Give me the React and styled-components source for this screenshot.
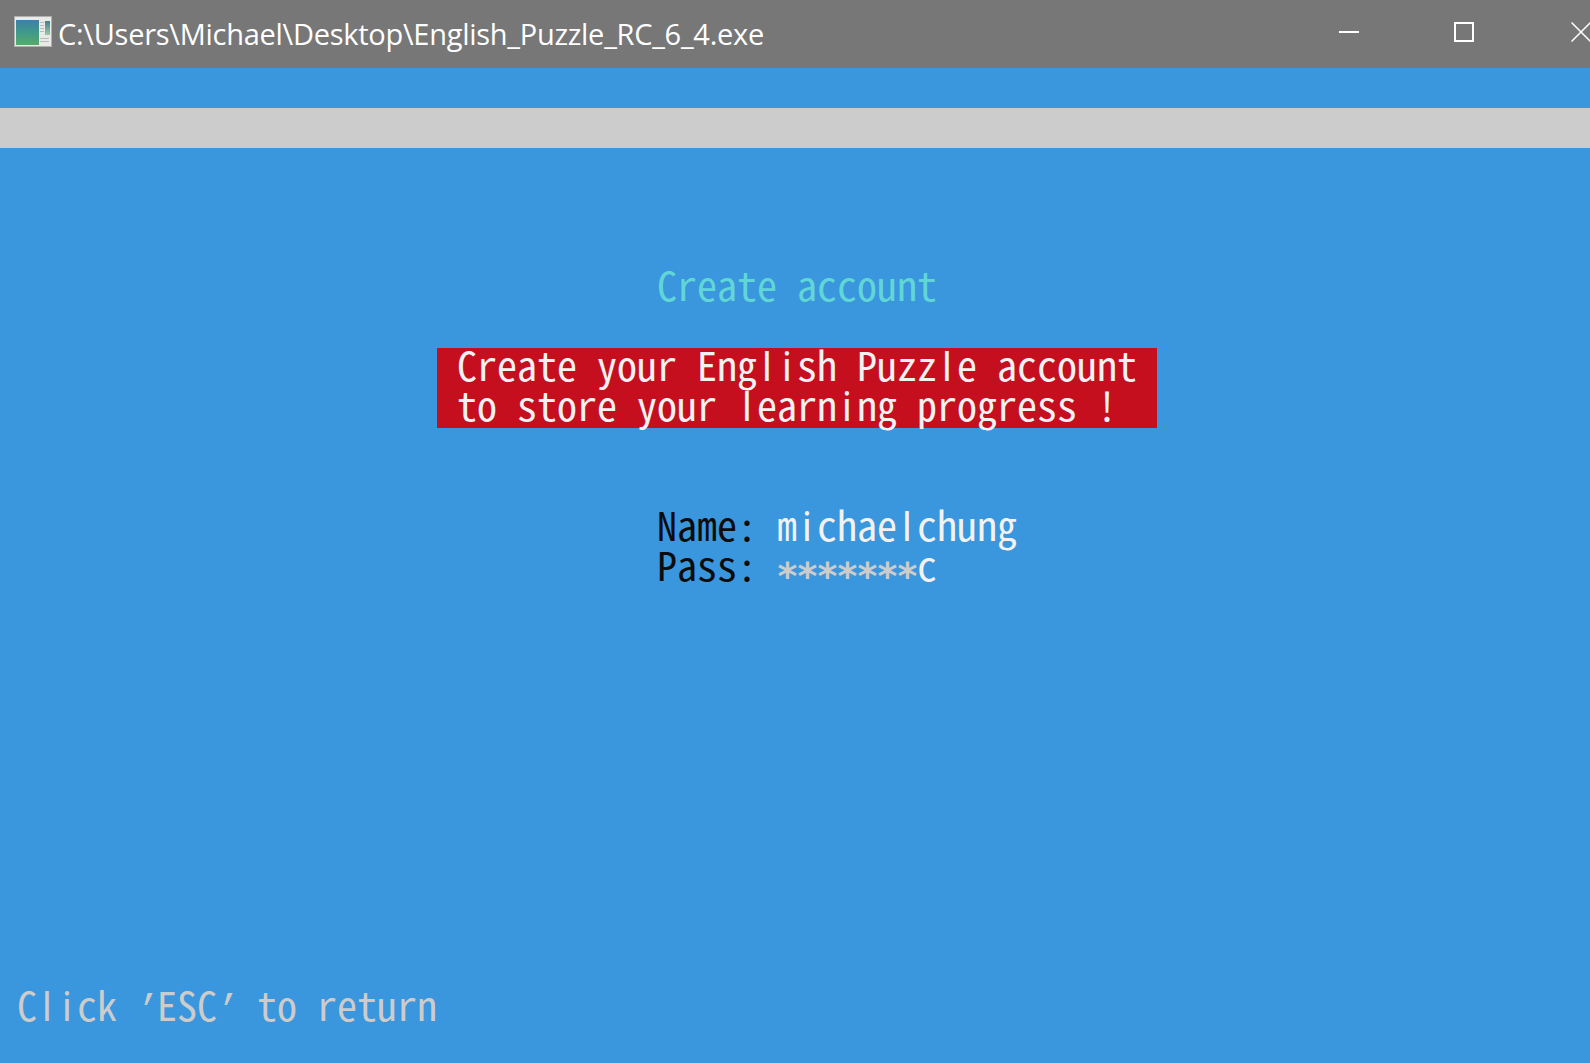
import styled, { createGlobalStyle } from "styled-components";

const COLORS = {
  blue: "#3a96dd",
  cyan: "#61d6d6",
  red: "#c50f1f",
  white: "#f2f2f2",
  gray: "#cccccc",
  black: "#0c0c0c",
};

const GlobalStyle = createGlobalStyle`
  html, body {
    margin: 0;
    padding: 0;
    height: 100%;
    overflow: hidden;
  }
  #root {
    height: 100%;
  }
`;

const AppIcon = () => (
  <svg width="38" height="31" viewBox="0 0 38 31">
    <defs>
      <linearGradient id="pane" x1="0" y1="0" x2="0" y2="1">
        <stop offset="0" stopColor="#3f7fa8" />
        <stop offset="0.5" stopColor="#3f9a8a" />
        <stop offset="1" stopColor="#5aa86a" />
      </linearGradient>
      <linearGradient id="strip" x1="0" y1="0" x2="0" y2="1">
        <stop offset="0" stopColor="#3f7f90" />
        <stop offset="1" stopColor="#9cc8a8" />
      </linearGradient>
    </defs>
    <rect x="0.5" y="0.5" width="37" height="30" fill="#e9e9e6" stroke="#b0b0b0" />
    <rect x="2" y="4" width="23" height="25" fill="url(#pane)" />
    <rect x="31" y="5" width="5" height="14" fill="url(#strip)" />
    <rect x="26" y="6" width="4" height="1" fill="#bbb" />
    <rect x="26" y="9" width="4" height="1" fill="#bbb" />
    <rect x="26" y="12" width="4" height="1" fill="#bbb" />
    <rect x="26" y="15" width="4" height="1" fill="#bbb" />
    <rect x="26" y="22" width="9" height="1" fill="#bbb" />
    <rect x="26" y="25" width="9" height="1" fill="#bbb" />
  </svg>
);

const MinimizeIcon = () => (
  <svg width="20" height="20" viewBox="0 0 20 20">
    <path d="M0 10h20" stroke="#fff" strokeWidth="2" />
  </svg>
);

const MaximizeIcon = () => (
  <svg width="20" height="20" viewBox="0 0 20 20">
    <rect x="1" y="1" width="18" height="18" fill="none" stroke="#fff" strokeWidth="2" />
  </svg>
);

const CloseIcon = () => (
  <svg width="20" height="20" viewBox="0 0 20 20">
    <path d="M0.5 0.5l19 19M19.5 0.5l-19 19" stroke="#fff" strokeWidth="1.5" />
  </svg>
);

// the console font draws l and i as plain bars, so those two take a
// sans glyph centred in a full cell
const Cells = ({ text }) =>
  text.split(/([li])/).map((part, i) =>
    part === "l" || part === "i" ? <Bar key={i}>{part}</Bar> : part
  );

const App = () => {
  return (
    <Window>
      <GlobalStyle />
      <TitleBar>
        <IconSlot>
          <AppIcon />
        </IconSlot>
        <TitleText>C:\Users\Michael\Desktop\English_Puzzle_RC_6_4.exe</TitleText>
        <Controls>
          <ControlButton $width={114}>
            <MinimizeIcon />
          </ControlButton>
          <ControlButton $width={116}>
            <MaximizeIcon />
          </ControlButton>
          <ControlButton $width={118}>
            <CloseIcon />
          </ControlButton>
        </Controls>
      </TitleBar>

      <Console>
        <Row />
        <GrayBar />
        <Row />
        <Row />
        <Row />
        <Row $col={32} $color={COLORS.cyan}>Create account</Row>
        <Row />
        <Banner>
          <BannerLine><Cells text="Create your English Puzzle account" /></BannerLine>
          <BannerLine><Cells text="to store your learning progress !" /></BannerLine>
        </Banner>
        <Row />
        <Row />
        <Row $col={32} $color={COLORS.black}>
          Name: <Value><Cells text="michaelchung" /></Value>
        </Row>
        <Row $col={32} $color={COLORS.black}>
          Pass: <Mask>*******</Mask><Value>c</Value>
        </Row>
        <Footer $color={COLORS.gray}>
          <Cells text="Click " /><Quote>’</Quote>ESC<Quote>’</Quote> to return
        </Footer>
      </Console>
    </Window>
  );
};

const Window = styled.div`
  display: flex;
  flex-direction: column;
  width: 1590px;
  height: 1063px;
  overflow: hidden;
  background-color: ${COLORS.blue};
`;

const TitleBar = styled.header`
  display: flex;
  align-items: center;
  flex-shrink: 0;
  box-sizing: border-box;
  height: 68px;
  padding: 0 0 5px 14px;
  background-color: #777777;
  overflow: hidden;
`;

const IconSlot = styled.div`
  display: flex;
  width: 38px;
  height: 31px;
  margin-right: 6px;
`;

const TitleText = styled.div`
  margin-top: 3px;
  font-family: "Open Sans", "Noto Sans", sans-serif;
  font-size: 29px;
  letter-spacing: -0.27px;
  color: #ffffff;
  white-space: nowrap;
`;

const Controls = styled.div`
  display: flex;
  flex-shrink: 0;
  align-self: flex-start;
  margin-left: auto;
  margin-right: -50px;
`;

const ControlButton = styled.div`
  display: flex;
  align-items: center;
  justify-content: center;
  width: ${({ $width }) => $width}px;
  height: 64px;
`;

const Console = styled.main`
  display: flex;
  flex-direction: column;
  flex: 1;
  padding-left: 17px;
  font-family: "Noto Sans CJK JP", "Liberation Mono", monospace;
  font-feature-settings: "hwid";
  font-size: 40px;
  line-height: 32px;
  white-space: pre;
`;

const Row = styled.div`
  height: 40px;
  margin-left: ${({ $col }) => ($col || 0) * 20}px;
  color: ${({ $color }) => $color || COLORS.white};
`;

const GrayBar = styled.div`
  height: 40px;
  margin-left: -17px;
  background-color: ${COLORS.gray};
`;

const Banner = styled.div`
  width: 680px;
  margin-left: 420px;
  padding: 0 20px;
  background-color: ${COLORS.red};
`;

const BannerLine = styled.div`
  height: 40px;
  color: ${COLORS.white};
`;

const Value = styled.span`
  color: ${COLORS.white};
`;

const Bar = styled.span`
  display: inline-block;
  width: 20px;
  text-align: center;
  font-family: "Noto Sans", sans-serif;
  font-feature-settings: normal;
`;

const Mask = styled.span`
  margin: 0 1px 0 -1px;
  font-family: "DejaVu Sans Mono", monospace;
  font-size: 38px;
  font-weight: 700;
  letter-spacing: -2.88px;
  line-height: 0;
  vertical-align: -8px;
  color: ${COLORS.gray};
`;

const Quote = styled.span`
  display: inline-block;
  width: 20px;
  font-family: "Liberation Mono", monospace;
  font-size: 38px;
`;

const Footer = styled(Row)`
  margin-top: auto;
  margin-bottom: 35px;
`;

export default App;
